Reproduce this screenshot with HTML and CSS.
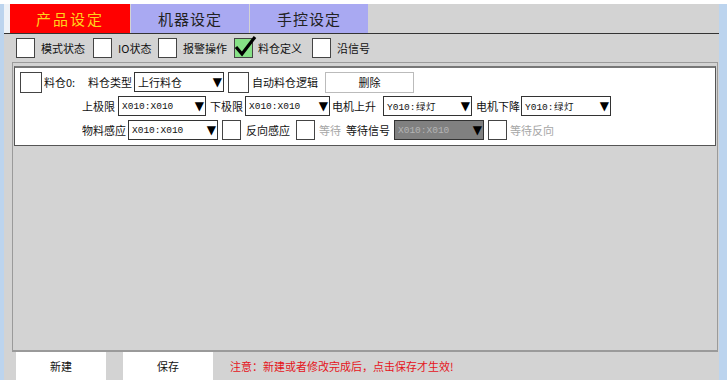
FILE: index.html
```html
<!DOCTYPE html>
<html lang="zh-CN">
<head>
  <meta charset="UTF-8">
  <title>产品设定</title>
  <link rel="stylesheet" href="styles.css">
</head>
<body>
  <div class="app">
    <div class="tabs">
      <div class="tab active">产品设定</div>
      <div class="tab">机器设定</div>
      <div class="tab">手控设定</div>
    </div>

    <div class="checks">
      <span class="box"></span><span class="lbl" style="width:52px">模式状态</span>
      <span class="box"></span><span class="lbl" style="width:40px">IO状态</span>
      <span class="box"></span><span class="lbl" style="width:51px">报警操作</span>
      <span class="box checked">
        <svg width="24" height="24" viewBox="0 0 24 24"><path d="M2 13 L8 20 L21 3" fill="none" stroke="#000" stroke-width="3.2"/></svg>
      </span><span class="lbl first-after-check" style="width:54px">料仓定义</span>
      <span class="box"></span><span class="lbl">沿信号</span>
    </div>

    <div class="list">
      <div class="entry">
        <div class="line first">
          <span class="box"></span>
          <span class="txt" style="width:44px; margin-left:2px">料仓0:</span>
          <span class="txt" style="width:46px">料仓类型</span>
          <span class="sel cn" style="width:90px">上行料仓<i>▼</i></span>
          <span class="box" style="margin-left:4px"></span>
          <span class="txt" style="width:73px; margin-left:3px">自动料仓逻辑</span>
          <span class="btn-del">删除</span>
        </div>
        <div class="line">
          <span class="txt" style="width:36px">上极限</span>
          <span class="sel" style="width:88px">X010:X010<i>▼</i></span>
          <span class="txt" style="width:39px; padding-left:4px">下极限</span>
          <span class="sel" style="width:85px">X010:X010<i>▼</i></span>
          <span class="txt" style="width:53px; padding-left:2px">电机上升</span>
          <span class="sel" style="width:89px">Y010:绿灯<i>▼</i></span>
          <span class="txt" style="width:49px; padding-left:4px">电机下降</span>
          <span class="sel" style="width:90px">Y010:绿灯<i>▼</i></span>
        </div>
        <div class="line">
          <span class="txt" style="width:46px">物料感应</span>
          <span class="sel" style="width:90px">X010:X010<i>▼</i></span>
          <span class="box" style="margin-left:4px"></span>
          <span class="txt" style="width:50px; margin-left:5px">反向感应</span>
          <span class="box"></span>
          <span class="txt off" style="width:27px; margin-left:4px">等待</span>
          <span class="txt" style="width:48px">等待信号</span>
          <span class="sel disabled" style="width:90px">X010:X010<i>▼</i></span>
          <span class="box" style="margin-left:4px"></span>
          <span class="txt off" style="margin-left:3px">等待反向</span>
        </div>
      </div>
    </div>

    <div class="footer">
      <span class="fbtn">新建</span>
      <span class="fbtn">保存</span>
      <span class="note">注意：新建或者修改完成后，点击保存才生效!</span>
    </div>
  </div>
</body>
</html>
```

FILE: styles.css
```css
* {
  box-sizing: border-box;
}

body {
  margin: 0;
  background: #fff;
  font-family: "Noto Sans CJK SC", "DejaVu Sans", sans-serif;
  font-size: 11px;
  color: #111;
}

.app {
  margin-top: 4px;
  height: 376px;
  background: #d3d3d3;
  border-left: 4px solid #bcd4ee;
  border-right: 8px solid #bcd4ee;
  display: flex;
  flex-direction: column;
}

/* Tabs */
.tabs {
  display: flex;
  height: 30px;
  padding-left: 6px;
  border-bottom: 1px solid #333;
  background: linear-gradient(to right, #eef2f7 6px, #d3d3d3 6px);
}

.tab {
  width: 118px;
  margin-right: 1px;
  background: #a9a9f2;
  display: flex;
  align-items: center;
  justify-content: center;
  font-size: 15px;
  letter-spacing: 1px;
  color: #222;
}

.tab.active {
  width: 120px;
  background: #ff0000;
  color: #ffd21c;
  letter-spacing: 2px;
}

/* Checkbox row */
.checks {
  height: 28px;
  display: flex;
  align-items: center;
  padding-left: 12px;
}

.box {
  width: 19px;
  height: 20px;
  background: #fff;
  border: 1px solid #444;
  flex: none;
  position: relative;
}

.checks .lbl {
  margin-left: 6px;
  white-space: nowrap;
  flex: none;
}

.checks .lbl.first-after-check {
  margin-left: 5px;
}

.box.checked {
  background: #86e186;
}

.box.checked svg {
  position: absolute;
  left: -1px;
  top: -5px;
}

/* List */
.list {
  flex: 1;
  margin: 0 1px 0 8px;
  border: 1px solid #9a9a9a;
  border-bottom: 2px solid #9a9a9a;
  padding: 3px 1px 0 1px;
}

.entry {
  background: #fff;
  border: 1px solid #555;
  border-top: 2px solid #777;
  height: 80px;
  padding: 2px 0 0 5px;
}

.line {
  height: 24px;
  display: flex;
  align-items: center;
  padding-left: 62px;
  white-space: nowrap;
}

.line.first {
  padding-left: 0;
}

.line .box {
  width: 19px;
  height: 20px;
}

.line.first .box:first-child {
  width: 22px;
  height: 21px;
}

.line.first .box {
  width: 21px;
  height: 21px;
}

.txt {
  flex: none;
}

.txt.off {
  color: #a6a6a6;
}

.sel {
  height: 20px;
  border: 1px solid #333;
  background: #fff;
  display: flex;
  align-items: center;
  padding-left: 3px;
  font-family: "Liberation Mono", monospace;
  font-size: 9.5px;
  position: relative;
  flex: none;
}

.sel.cn {
  font-family: "Noto Sans CJK SC", sans-serif;
  font-size: 11px;
}

.sel i {
  font-style: normal;
  font-family: "DejaVu Sans", sans-serif;
  font-size: 12px;
  position: absolute;
  right: 1px;
  top: 1px;
  line-height: 17px;
  color: #000;
}

.sel.disabled {
  background: #808080;
  color: #b4b4b4;
}

.btn-del {
  width: 89px;
  height: 21px;
  border: 1px solid #bbb;
  display: flex;
  align-items: center;
  justify-content: center;
  flex: none;
}

/* Footer */
.footer {
  height: 28px;
  display: flex;
  align-items: center;
  padding-left: 12px;
}

.fbtn {
  width: 90px;
  height: 28px;
  background: #fff;
  display: flex;
  align-items: center;
  justify-content: center;
  margin-right: 17px;
}

.note {
  color: #e5131b;
}
```
